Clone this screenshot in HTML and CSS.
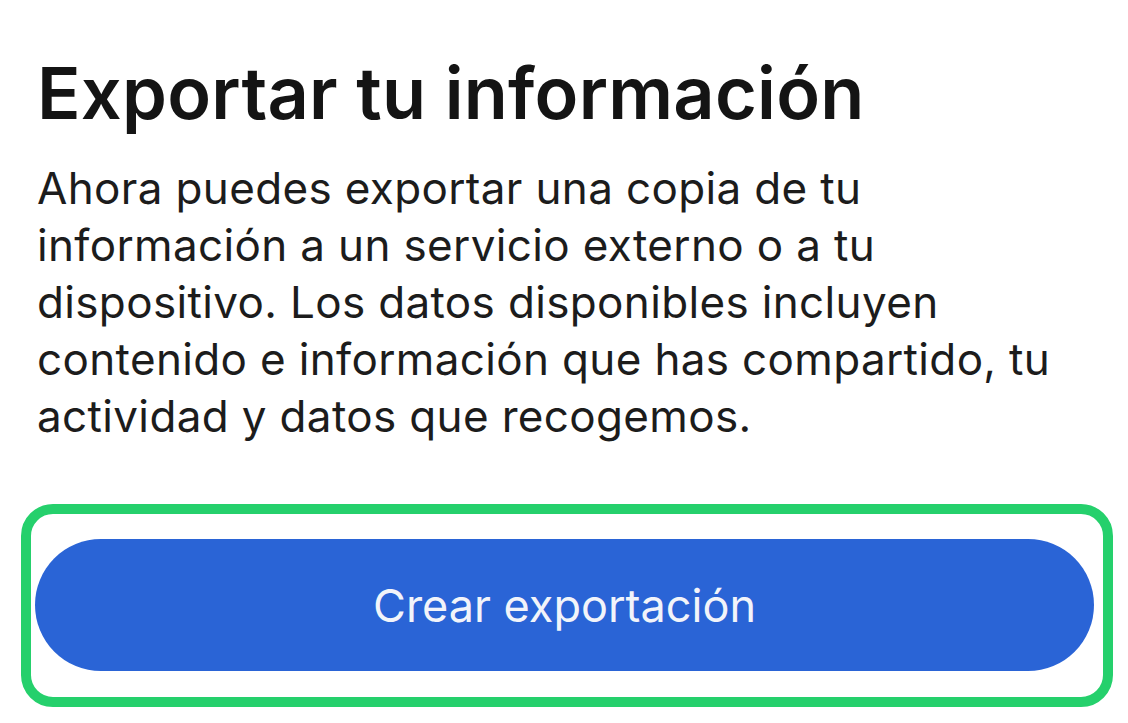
FILE: index.html
```html
<!DOCTYPE html>
<html lang="es">
<head>
<meta charset="utf-8">
<link rel="stylesheet" href="styles.css">
</head>
<body>
<main class="page">
  <h1 class="title">Exportar tu información</h1>
  <p class="desc">Ahora puedes exportar una copia de tu información a un servicio externo o a tu dispositivo. Los datos disponibles incluyen contenido e información que has compartido, tu actividad y datos que recogemos.</p>
  <div class="highlight">
    <button class="cta">Crear exportación</button>
  </div>
</main>
</body>
</html>
```
FILE: styles.css
```css
html, body {
  margin: 0;
  padding: 0;
  background: #ffffff;
}
body {
  width: 1128px;
  height: 723px;
  overflow: hidden;
  font-family: Inter, "Noto Sans", sans-serif;
}
.page {
  display: flex;
  flex-direction: column;
  padding: 48px 0 0 0;
}
.title {
  margin: 0 0 0 37px;
  font-size: 72px;
  font-weight: 600;
  line-height: 90px;
  letter-spacing: 0.25px;
  color: #141414;
}
.desc {
  margin: 22px 0 0 37px;
  width: 1040px;
  font-size: 44px;
  font-weight: 400;
  line-height: 57px;
  letter-spacing: 0.35px;
  color: #1c1c1c;
}
.highlight {
  margin: 59px 0 0 21px;
  width: 1092px;
  height: 203px;
  box-sizing: border-box;
  border: 10px solid #25d06c;
  border-radius: 32px;
  padding: 25px 9px 0 4px;
}
.cta {
  display: block;
  width: 1059px;
  height: 132px;
  border: none;
  border-radius: 66px;
  background: #2a64d6;
  color: #f2f4fa;
  font-family: Inter, "Noto Sans", sans-serif;
  font-size: 45px;
  font-weight: 400;
  padding: 0;
}
```
